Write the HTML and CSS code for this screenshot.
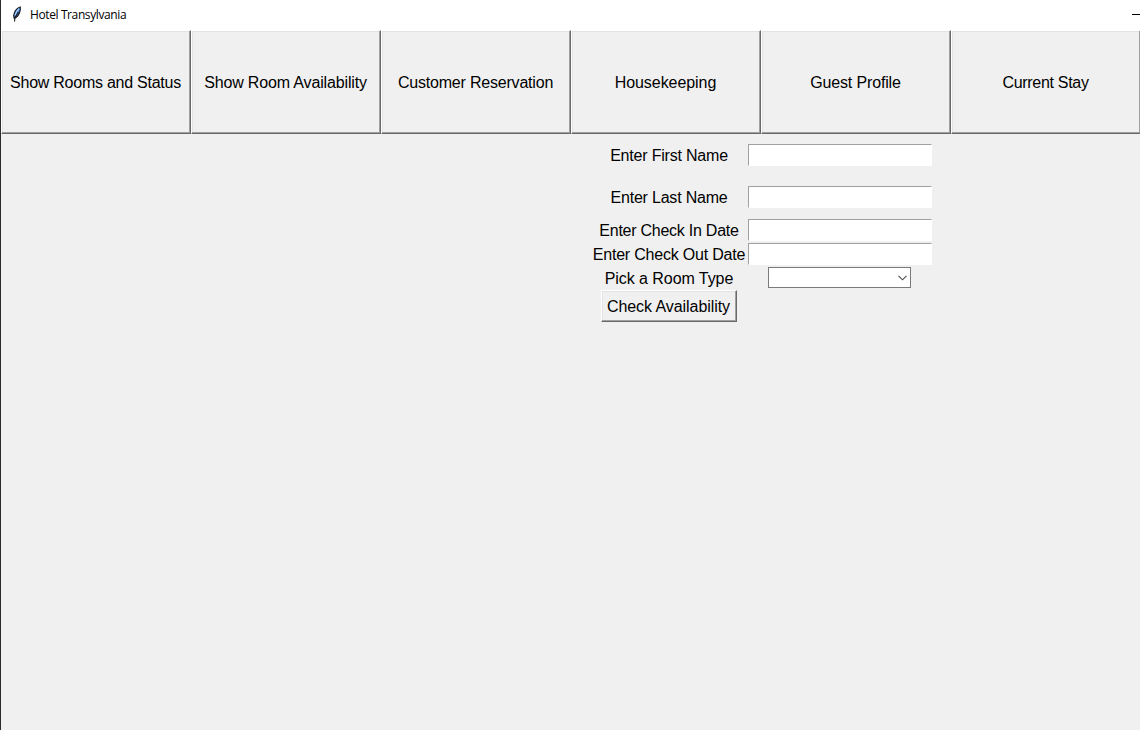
FILE: index.html
```html
<!DOCTYPE html>
<html lang="en">
<head>
<meta charset="utf-8">
<title>Hotel Transylvania</title>
<link rel="stylesheet" href="styles.css">
</head>
<body>
<div class="window">
  <header class="titlebar">
    <svg class="feather" width="12" height="18" viewBox="0 0 12 18">
      <path d="M9.300 2C7 2.500 5 4.500 3.700 7L2.600 10.500L3.200 13.300C5.500 12.500 7.500 10.500 8.600 7.500C9.300 5.500 9.500 3.500 9.300 2Z" fill="#4a83d4" stroke="#15181f" stroke-width="1.100"/>
      <path d="M8 3.700C6 5.500 4.800 7.500 4 10.500" fill="none" stroke="#a9cdf7" stroke-width="1.200"/>
      <path d="M7.500 7L4 12.500L3.500 16.500" fill="none" stroke="#15181f" stroke-width="1.100"/>
    </svg>
    <span class="title">Hotel Transylvania</span>
    <span class="minimize"></span>
  </header>
  <nav class="toolbar">
    <button class="raised tab tight"><span>Show Rooms and Status</span></button>
    <button class="raised tab snug"><span>Show Room Availability</span></button>
    <button class="raised tab close"><span>Customer Reservation</span></button>
    <button class="raised tab loose"><span>Housekeeping</span></button>
    <button class="raised tab snug"><span>Guest Profile</span></button>
    <button class="raised tab tighter"><span>Current Stay</span></button>
  </nav>
  <main class="form">
    <label class="close">Enter First Name</label><div class="entry"></div>
    <label class="close">Enter Last Name</label><div class="entry"></div>
    <label class="tight">Enter Check In Date</label><div class="entry"></div>
    <label class="close">Enter Check Out Date</label><div class="entry"></div>
    <label class="loose">Pick a Room Type</label>
    <div class="combo"><svg width="9" height="6" viewBox="0 0 9 6"><path d="M.5 .8L4.500 4.800L8.500 .8" fill="none" stroke="#505050" stroke-width="1.150"/></svg></div>
    <button class="raised check loose"><span>Check Availability</span></button>
  </main>
</div>
</body>
</html>
```

FILE: styles.css
```css
* { box-sizing: border-box; }
body {
  margin: 0;
  overflow: hidden;
  background: #f0f0f0;
  color: #000;
  font: 16px/20px "Liberation Sans", Arial, sans-serif;
}
.window {
  width: 1141px;
  height: 730px;
  border-left: 1px solid #2b2b2b;
}
.titlebar {
  display: flex;
  align-items: center;
  height: 30px;
  padding: 0 1px 0 10px;
  background: #fff;
}
.feather { margin-right: 7px; margin-top: -2px; }
.title {
  font: 12px/16px "Open Sans", "Noto Sans", sans-serif;
  letter-spacing: -0.39px;
}
.minimize {
  width: 8px;
  height: 1px;
  margin-left: auto;
  margin-top: -1px;
  background: #000;
}
.toolbar {
  display: grid;
  grid-template-columns: repeat(6, 190px);
  height: 104px;
}
.raised {
  display: flex;
  align-items: center;
  justify-content: center;
  padding: 2px 1px 0 0;
  background: #f0f0f0;
  border: 1px solid;
  border-color: #fff #696969 #696969 #fff;
  box-shadow: inset -1px -1px #a0a0a0, inset 1px 1px #e3e3e3;
  color: #000;
  font: inherit;
  white-space: nowrap;
}
.form {
  display: grid;
  grid-template-columns: 154px 184px;
  grid-template-rows: 42px 42px 24px 24px 24px 32px;
  column-gap: 2px;
  width: 340px;
  margin-left: 591px;
  align-items: center;
  justify-items: center;
  white-space: nowrap;
}
.form label { padding-top: 2px; }
.entry {
  width: 184px;
  height: 22px;
  background: #fff;
  border: 1px solid;
  border-color: #a0a0a0 #fff #fff #a0a0a0;
}
.combo {
  display: flex;
  align-items: center;
  justify-content: flex-end;
  width: 143px;
  height: 21px;
  margin-top: -1px;
  margin-right: 1px;
  padding-right: 3px;
  background: #fff;
  border: 1px solid #7a7a7a;
}
.check { width: 136px; height: 32px; }

/* Caption tracking */
.loose { letter-spacing: -0.06px; }
.snug { letter-spacing: -0.15px; }
.close { letter-spacing: -0.2px; }
.tight { letter-spacing: -0.25px; }
.tighter { letter-spacing: -0.3px; }
```
